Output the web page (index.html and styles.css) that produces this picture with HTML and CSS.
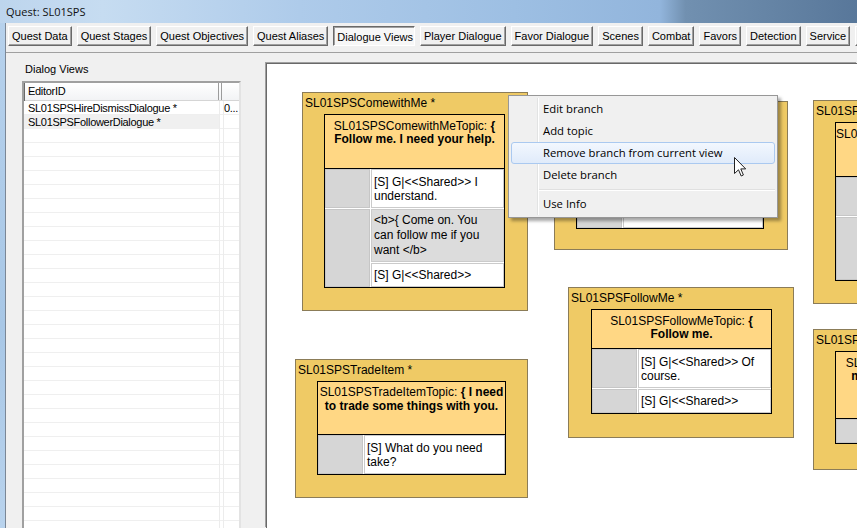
FILE: index.html
```html
<!DOCTYPE html>
<html lang="en">
	<head>
		<meta charset="UTF-8" />
		<title>Quest: SL01SPS</title>
		<link rel="stylesheet" href="styles.css">
	</head>
	<body>
		<div class="window">
			<div class="titlebar">Quest: SL01SPS</div>
			<div class="frame">
				<div class="client">
					<div class="tabs">
						<div class="tab">Quest Data</div>
						<div class="tab">Quest Stages</div>
						<div class="tab">Quest Objectives</div>
						<div class="tab">Quest Aliases</div>
						<div class="tab selected">Dialogue Views</div>
						<div class="tab">Player Dialogue</div>
						<div class="tab">Favor Dialogue</div>
						<div class="tab">Scenes</div>
						<div class="tab">Combat</div>
						<div class="tab">Favors</div>
						<div class="tab">Detection</div>
						<div class="tab">Service</div>
						<div class="tab">Scripts</div>
					</div>

					<div class="page">
						<div class="views">
							<div class="views-label">Dialog Views</div>
							<div class="list">
								<div class="list-head">
									<div class="col-id">EditorID</div>
									<div class="col-extra"></div>
								</div>
								<div class="list-body">
									<div class="list-row">
										<div class="col-id">SL01SPSHireDismissDialogue *</div>
										<div class="col-extra">0...</div>
									</div>
									<div class="list-row selected">
										<div class="col-id">SL01SPSFollowerDialogue *</div>
										<div class="col-extra"></div>
									</div>
								</div>
							</div>
						</div>

						<div class="canvas">
							<div class="node" id="comewithme">
								<div class="node-title">SL01SPSComewithMe *</div>
								<div class="topic">
									<div class="topic-head">SL01SPSComewithMeTopic: <b>{</b><br><b>Follow me. I need your help.</b></div>
									<div class="responses">
										<div class="cond"></div>
										<div class="line l2">[S] G|&lt;&lt;Shared&gt;&gt; I<br>understand.</div>
										<div class="cond span"></div>
										<div class="line l3 prompt">&lt;b&gt;{ Come on. You<br>can follow me if you<br>want &lt;/b&gt;</div>
										<div class="line l1">[S] G|&lt;&lt;Shared&gt;&gt;</div>
									</div>
								</div>
							</div>

							<div class="node" id="hidden-branch">
								<div class="node-title">SL01SPSDismiss *</div>
								<div class="topic">
									<div class="topic-head">SL01SPSDismissTopic: <b>{</b></div>
									<div class="responses">
										<div class="cond"></div>
										<div class="line l2"></div>
										<div class="cond"></div>
										<div class="line l1"></div>
									</div>
								</div>
							</div>

							<div class="node" id="hire">
								<div class="node-title">SL01SPSHire *</div>
								<div class="topic">
									<div class="topic-head">SL01SPSHireTopic: <b>{ I'd like to hire you for a while.</b></div>
									<div class="responses">
										<div class="cond"></div>
										<div class="line l2"></div>
										<div class="cond"></div>
										<div class="line l4"></div>
									</div>
								</div>
							</div>

							<div class="node" id="followme">
								<div class="node-title">SL01SPSFollowMe *</div>
								<div class="topic">
									<div class="topic-head">SL01SPSFollowMeTopic: <b>{</b><br><b>Follow me.</b></div>
									<div class="responses">
										<div class="cond"></div>
										<div class="line l2">[S] G|&lt;&lt;Shared&gt;&gt; Of<br>course.</div>
										<div class="cond"></div>
										<div class="line l1">[S] G|&lt;&lt;Shared&gt;&gt;</div>
									</div>
								</div>
							</div>

							<div class="node" id="tradeitem">
								<div class="node-title">SL01SPSTradeItem *</div>
								<div class="topic">
									<div class="topic-head">SL01SPSTradeItemTopic: <b>{ I need</b><br><b>to trade some things with you.</b></div>
									<div class="responses">
										<div class="cond"></div>
										<div class="line l2">[S] What do you need<br>take?</div>
									</div>
								</div>
							</div>

							<div class="node" id="dismiss">
								<div class="node-title">SL01SPSDismiss *</div>
								<div class="topic">
									<div class="topic-head">SL01SPSDismissTopic: <b>{</b><br><b>make yourself useful.</b></div>
									<div class="responses">
										<div class="cond"></div>
										<div class="line l1"></div>
									</div>
								</div>
							</div>

							<div class="menu">
								<div class="menu-item">Edit branch</div>
								<div class="menu-item">Add topic</div>
								<div class="menu-item hover">Remove branch from current view</div>
								<div class="menu-item">Delete branch</div>
								<div class="menu-sep"></div>
								<div class="menu-item">Use Info</div>
							</div>

							<svg class="cursor" width="13" height="21" viewBox="0 0 13 21">
								<path d="M0.5 0.5 V16.5 L4.5 12.8 L7.2 19 L9.4 18 L6.8 11.9 H11.7 Z" fill="#fff" stroke="#222" stroke-width="1" stroke-linejoin="round" />
							</svg>
						</div>
					</div>
				</div>
			</div>
		</div>
	</body>
</html>
```

FILE: styles.css
```css
body {
	margin: 0;
	overflow: hidden;
	font-family: "Liberation Sans", Arial, sans-serif;
	font-size: 11px;
	color: #000;
}
.window {
	display: flex;
	flex-direction: column;
	width: 857px;
	height: 528px;
}
.titlebar {
	height: 23px;
	padding-left: 6px;
	font-family: "Open Sans", sans-serif;
	font-size: 11px;
	line-height: 24px;
	color: #111;
	background: linear-gradient(to right, #bdd5ed 0%, #c6dcf1 12%, #aecbea 35%, #9dbfe3 60%, #92b5dc 77%, #7190b0 80%, #6584a5 90%, #58779a 100%);
}
.frame {
	flex: 1;
	display: flex;
	min-height: 0;
	padding-left: 5px;
	background: linear-gradient(to bottom, #b6d1ec, #a8c7e6 60%, #b9d3ed);
}
.client {
	flex: 1;
	display: flex;
	flex-direction: column;
	min-width: 0;
	background-color: #f0f0f0;
	border-left: 1px solid #7b8796;
}

/* tab buttons */
.tabs {
	display: flex;
	gap: 5px;
	padding: 3px 0 6px 2px;
	overflow: hidden;
	white-space: nowrap;
}
.tab {
	flex: none;
	height: 20px;
	box-sizing: border-box;
	padding: 0 3px;
	line-height: 18px;
	border: 1px solid;
	border-color: #fff #696969 #696969 #fff;
	box-shadow: inset -1px -1px #a0a0a0;
}
.tab.selected {
	padding: 1px 1px 0 3px;
	background-color: #f7f7f7;
	border-color: #696969 #fff #fff #696969;
	box-shadow: inset 1px 1px #a0a0a0;
}

.page {
	flex: 1;
	display: flex;
	min-height: 0;
	border-top: 1px solid #a0a0a0;
}

/* dialog views list */
.views {
	flex: none;
	width: 259px;
	display: flex;
	flex-direction: column;
	padding: 10px 0 0 16px;
	box-sizing: border-box;
}
.views-label {
	padding-left: 3px;
	line-height: 13px;
}
.list {
	flex: 1;
	display: flex;
	flex-direction: column;
	width: 219px;
	margin-top: 5px;
	box-sizing: border-box;
	background-color: #fff;
	border: 2px solid;
	border-color: #a0a0a0 #e3e3e3 #e3e3e3 #a0a0a0;
	border-bottom: none;
	box-shadow: inset 1px 1px #696969;
	letter-spacing: -0.3px;
}
.list-head {
	display: flex;
	height: 18px;
	box-sizing: border-box;
	margin-left: 1px;
	background: linear-gradient(#fff, #f2f3f5);
	border-bottom: 1px solid #d5d5d5;
	line-height: 16px;
}
.list-head .col-id {
	width: 194px;
	padding-left: 3px;
	box-sizing: border-box;
	border-right: 1px solid #9c9c9c;
}
.list-head .col-extra {
	flex: 1;
	margin-left: 2px;
	border-left: 1px solid #9c9c9c;
}
.list-body {
	flex: 1;
	background:
		linear-gradient(to right, transparent 195px, #ececec 195px 196px, transparent 196px 199px, #ececec 199px 200px, transparent 200px),
		repeating-linear-gradient(to bottom, #fff 0 13px, #efefef 13px 14px);
}
.list-row {
	display: flex;
	height: 14px;
	line-height: 15px;
}
.list-row .col-id {
	width: 195px;
	padding-left: 4px;
	box-sizing: border-box;
	white-space: nowrap;
}
.list-row .col-extra {
	padding-left: 5px;
}
.list-row.selected .col-id {
	background-color: #f0f0f0;
}

/* dialogue view canvas */
.canvas {
	flex: 1;
	position: relative;
	overflow: hidden;
	margin: 10px 0 0 1px;
	background-color: #fff;
	border-top: 1px solid #696969;
	border-left: 1px solid #696969;
	box-shadow: -1px -1px 0 #a0a0a0;
}
.node {
	position: absolute;
	box-sizing: border-box;
	background-color: #efca65;
	border: 1px solid #8b7c58;
	font-family: "Liberation Sans", Arial, sans-serif;
	font-size: 12px;
}
.node-title {
	height: 21px;
	box-sizing: border-box;
	padding: 3px 0 0 2px;
	line-height: 14px;
	white-space: nowrap;
}
.topic {
	margin: 0 22px 0 21px;
	background-color: #fff;
	border: 1px solid #000;
}
.topic-head {
	box-sizing: border-box;
	padding-top: 5px;
	overflow: hidden;
	white-space: nowrap;
	text-align: center;
	line-height: 13px;
	background-color: #ffd784;
	border-bottom: 1px solid #000;
}
.responses {
	display: grid;
	grid-template-columns: 45px 1fr;
	gap: 1px;
}
.cond {
	background-color: #d6d6d6;
	box-shadow: inset 0 0 0 1px #c6c6c6;
}
.cond.span {
	grid-row: span 2;
}
.line {
	display: flex;
	align-items: center;
	padding: 0 3px;
	overflow: hidden;
	white-space: nowrap;
	line-height: 14px;
	box-shadow: inset 0 0 0 1px #cbcbcb;
}
.line.prompt {
	background-color: #dcdcdc;
	line-height: 15px;
}
.l1 { height: 24px; }
.l2 { height: 39px; }
.l3 { height: 53px; }
.l4 { height: 63px; }

#comewithme { left: 35px; top: 28px; width: 226px; height: 219px; }
#comewithme .topic-head { height: 54px; }
#hidden-branch { left: 287px; top: 37px; width: 234px; height: 149px; }
#hidden-branch .topic { margin-right: 23px; }
#hidden-branch .topic-head { height: 40px; }
#hire { left: 546px; top: 36px; width: 240px; height: 204px; }
#hire .topic-head { height: 54px; }
#followme { left: 301px; top: 223px; width: 226px; height: 151px; }
#followme .topic { margin-left: 22px; margin-right: 21px; }
#followme .topic-head { height: 39px; }
#tradeitem { left: 28px; top: 295px; width: 233px; height: 139px; }
#tradeitem .topic { margin-right: 21px; }
#tradeitem .topic-head { height: 53px; padding-top: 3px; line-height: 14px; }
#dismiss { left: 546px; top: 265px; width: 200px; height: 141px; }
#dismiss .topic-head { height: 67px; }

/* context menu */
.menu {
	position: absolute;
	left: 241px;
	top: 31px;
	z-index: 5;
	width: 270px;
	box-sizing: border-box;
	padding: 2px;
	background-color: #f0f0f0;
	border: 1px solid #979797;
	box-shadow: 3px 3px 3px rgba(0, 0, 0, 0.35);
	font-family: "Open Sans", sans-serif;
	font-size: 11.3px;
}
.menu::before {
	content: "";
	position: absolute;
	left: 28px;
	top: 2px;
	bottom: 2px;
	width: 1px;
	background-color: #e2e3e3;
	box-shadow: 1px 0 #fff;
}
.menu-item {
	position: relative;
	height: 22px;
	box-sizing: border-box;
	padding-left: 31px;
	line-height: 20px;
	border: 1px solid transparent;
	border-radius: 3px;
	white-space: nowrap;
}
.menu-item.hover {
	background: linear-gradient(to bottom, #f2f7fe, #e0ebfa);
	border-color: #aac9f0;
}
.menu-sep {
	height: 7px;
	margin-left: 28px;
	background: linear-gradient(to bottom, transparent 3px, #e0e0e0 3px 4px, #fff 4px 5px, transparent 5px);
}
.cursor {
	position: absolute;
	left: 467px;
	top: 93px;
	z-index: 6;
}
```
